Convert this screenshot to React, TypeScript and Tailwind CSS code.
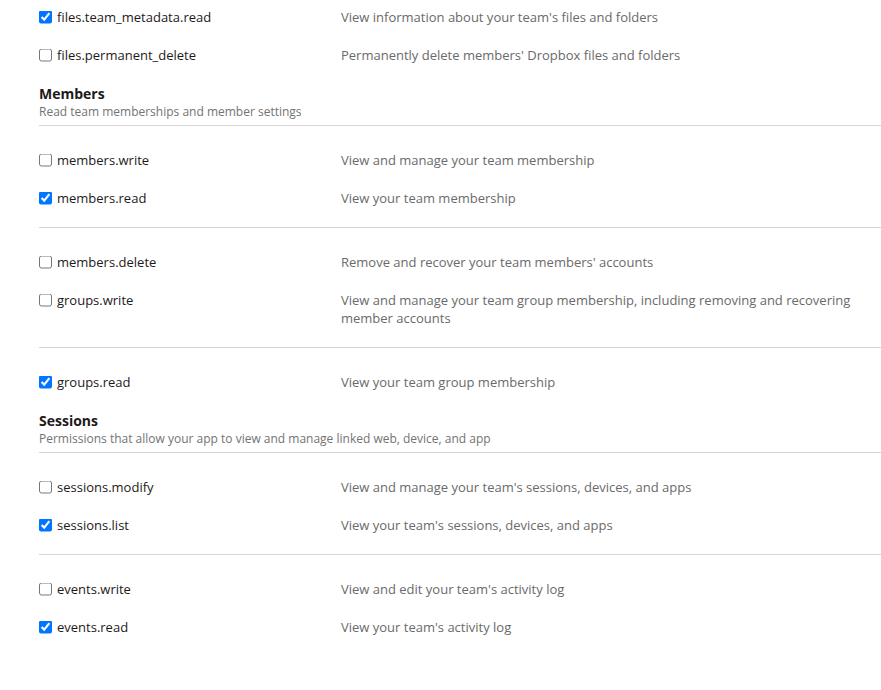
import React from 'react';

type Scope = { name: string; desc: string; checked?: boolean };

const font = { fontFamily: '"Open Sans", "Noto Sans", sans-serif' };

function Row({ scope }: { scope: Scope }) {
  return (
    <div className="flex py-[10px] text-[13px] leading-[18px]">
      <label className="flex items-center gap-[5px] w-[302px] shrink-0 h-[18px] text-[#1e1919]">
        <input
          type="checkbox"
          defaultChecked={scope.checked}
          className="w-[13px] h-[13px] m-0 shrink-0 -translate-y-[0.5px]"
        />
        <span>{scope.name}</span>
      </label>
      <div className="text-[#6a6a6a] pr-[20px]">{scope.desc}</div>
    </div>
  );
}

function Group({ scopes, first }: { scopes: Scope[]; first?: boolean }) {
  return (
    <div className={first ? 'pb-[10px] -mt-[2px]' : 'pt-[15px] pb-[10px]'}>
      {scopes.map((s) => (
        <Row key={s.name} scope={s} />
      ))}
    </div>
  );
}

function Section({ title, subtitle }: { title: string; subtitle: string }) {
  return (
    <div className="pb-[4px] border-b border-[#d6d6d6]">
      <div className="text-[14px] leading-[19px] font-bold text-[#1e1919]">{title}</div>
      <div className="text-[12px] leading-[18px] text-[#737373]">{subtitle}</div>
    </div>
  );
}

export default function App() {
  return (
    <div className="bg-white w-[881px] h-[690px] overflow-hidden pl-[39px]" style={font}>
      <Group
        first
        scopes={[
          { name: 'files.team_metadata.read', desc: "View information about your team's files and folders", checked: true },
          { name: 'files.permanent_delete', desc: "Permanently delete members' Dropbox files and folders" },
        ]}
      />
      <Section title="Members" subtitle="Read team memberships and member settings" />
      <div className="border-b border-[#d6d6d6]">
        <Group
          scopes={[
            { name: 'members.write', desc: 'View and manage your team membership' },
            { name: 'members.read', desc: 'View your team membership', checked: true },
          ]}
        />
      </div>
      <div className="border-b border-[#d6d6d6]">
        <Group
          scopes={[
            { name: 'members.delete', desc: "Remove and recover your team members' accounts" },
            {
              name: 'groups.write',
              desc: 'View and manage your team group membership, including removing and recovering member accounts',
            },
          ]}
        />
      </div>
      <Group scopes={[{ name: 'groups.read', desc: 'View your team group membership', checked: true }]} />
      <Section title="Sessions" subtitle="Permissions that allow your app to view and manage linked web, device, and app" />
      <div className="border-b border-[#d6d6d6]">
        <Group
          scopes={[
            { name: 'sessions.modify', desc: "View and manage your team's sessions, devices, and apps" },
            { name: 'sessions.list', desc: "View your team's sessions, devices, and apps", checked: true },
          ]}
        />
      </div>
      <Group
        scopes={[
          { name: 'events.write', desc: "View and edit your team's activity log" },
          { name: 'events.read', desc: "View your team's activity log", checked: true },
        ]}
      />
    </div>
  );
}
